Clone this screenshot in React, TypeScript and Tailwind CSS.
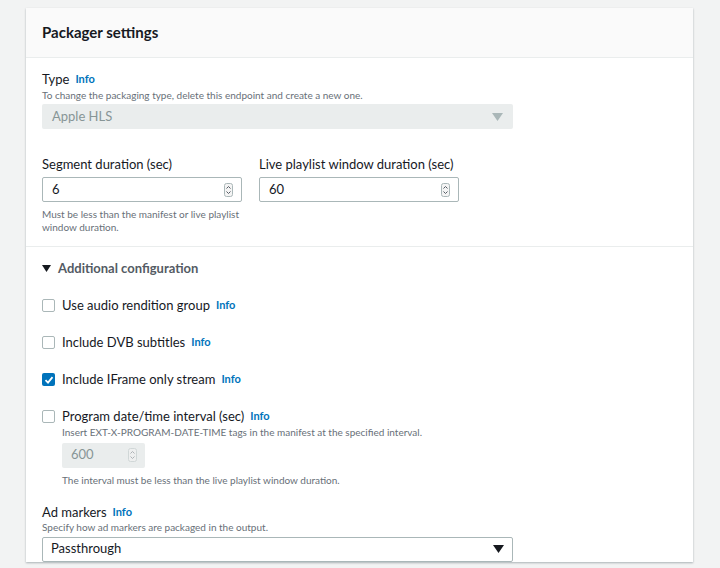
import React from "react";

const Info = () => <span className="ml-1.5 text-[11px] font-bold text-[#0073bb]">Info</span>;

const Spin = ({ light }: { light?: boolean }) => (
  <svg width="9" height="14" viewBox="0 0 9 14" className={light ? "opacity-40" : ""}>
    <rect x="0.5" y="0.5" width="8" height="13" rx="2" fill="#f4f4f4" stroke="#aab7b8" />
    <path d="M2.5 5.5 L4.5 3.5 L6.5 5.5" fill="none" stroke="#545b64" strokeWidth="1" />
    <path d="M2.5 8.5 L4.5 10.5 L6.5 8.5" fill="none" stroke="#545b64" strokeWidth="1" />
  </svg>
);

const Caret = ({ c }: { c: string }) => (
  <svg width="11" height="8" viewBox="0 0 11 8"><path d="M0 0 H11 L5.5 8 Z" fill={c} /></svg>
);

const Box = ({ checked }: { checked?: boolean }) =>
  checked ? (
    <span className="w-[13px] h-[13px] rounded-[2px] bg-[#0073bb] flex items-center justify-center shrink-0">
      <svg width="10" height="10" viewBox="0 0 10 10"><path d="M1.5 5.2 L4 7.6 L8.5 2.2" fill="none" stroke="white" strokeWidth="1.8" /></svg>
    </span>
  ) : (
    <span className="w-[13px] h-[13px] rounded-[2px] border border-[#aab7b8] bg-white shrink-0" />
  );

export default function App() {
  return (
    <div className="w-[720px] h-[568px] bg-[#f2f3f3] pt-[8px] pl-[26px] text-[#16191f]" style={{ fontFamily: 'Lato, "Noto Sans", sans-serif' }}>
      <div className="w-[667px] h-[554px] bg-white shadow-[0_1px_2px_rgba(0,28,36,0.3)]">
        <div className="h-[50px] bg-[#fafafa] border-b border-[#eaeded] pl-[16px] flex items-center">
          <h2 className="text-[15px] font-bold">Packager settings</h2>
        </div>
        <div className="px-[16px] pt-[12px]">
          <div className="text-[13px] leading-[18px] flex items-center">Type<Info /></div>
          <div className="text-[10px] leading-[14px] text-[#687078]">To change the packaging type, delete this endpoint and create a new one.</div>
          <div className="mt-[2px] w-[471px] h-[25px] bg-[#eaeded] rounded-[2px] flex items-center justify-between px-[10px] text-[13px] text-[#879596]">
            Apple HLS <Caret c="#aab7b8" />
          </div>
          <div className="flex gap-[17px] mt-[26px]">
            <div className="w-[200px]">
              <div className="text-[13px] leading-[18px]">Segment duration (sec)</div>
              <div className="mt-[4px] h-[25px] border border-[#aab7b8] rounded-[2px] flex items-center justify-between pl-[9px] pr-[8px] text-[13px]">6<Spin /></div>
              <div className="mt-[6px] text-[10px] leading-[13px] text-[#687078]">Must be less than the manifest or live playlist window duration.</div>
            </div>
            <div className="w-[200px]">
              <div className="text-[13px] leading-[18px] whitespace-nowrap">Live playlist window duration (sec)</div>
              <div className="mt-[4px] h-[25px] border border-[#aab7b8] rounded-[2px] flex items-center justify-between pl-[9px] pr-[8px] text-[13px]">60<Spin /></div>
            </div>
          </div>
        </div>
        <div className="border-t border-[#eaeded] mt-[12px] px-[16px] pt-[12px]">
          <div className="flex items-center gap-[7px] text-[13px] font-bold text-[#545b64]">
            <svg width="9" height="7" viewBox="0 0 9 7"><path d="M0 0 H9 L4.5 7 Z" fill="#16191f" /></svg>
            Additional configuration
          </div>
          <div className="mt-[18px] flex flex-col gap-[19px] text-[13px]">
            <div className="flex items-center gap-[7px] h-[18px]"><Box /><span className="flex items-center">Use audio rendition group<Info /></span></div>
            <div className="flex items-center gap-[7px] h-[18px]"><Box /><span className="flex items-center">Include DVB subtitles<Info /></span></div>
            <div className="flex items-center gap-[7px] h-[18px]"><Box checked /><span className="flex items-center">Include IFrame only stream<Info /></span></div>
            <div className="flex gap-[7px]">
              <div className="h-[18px] flex items-center"><Box /></div>
              <div>
                <div className="flex items-center h-[18px]">Program date/time interval (sec)<Info /></div>
                <div className="text-[10px] leading-[13px] text-[#687078]">Insert EXT-X-PROGRAM-DATE-TIME tags in the manifest at the specified interval.</div>
                <div className="mt-[4px] w-[83px] h-[25px] bg-[#eaeded] rounded-[2px] flex items-center justify-between pl-[9px] pr-[8px] text-[#879596]">600<Spin light /></div>
                <div className="mt-[6px] text-[10px] leading-[13px] text-[#687078]">The interval must be less than the live playlist window duration.</div>
              </div>
            </div>
          </div>
          <div className="mt-[16px] text-[13px] leading-[18px] flex items-center">Ad markers<Info /></div>
          <div className="text-[10px] leading-[13px] text-[#687078]">Specify how ad markers are packaged in the output.</div>
          <div className="mt-[3px] w-[471px] h-[25px] border border-[#aab7b8] rounded-[2px] flex items-center justify-between px-[8px] text-[13px]">
            Passthrough <Caret c="#16191f" />
          </div>
        </div>
      </div>
    </div>
  );
}
